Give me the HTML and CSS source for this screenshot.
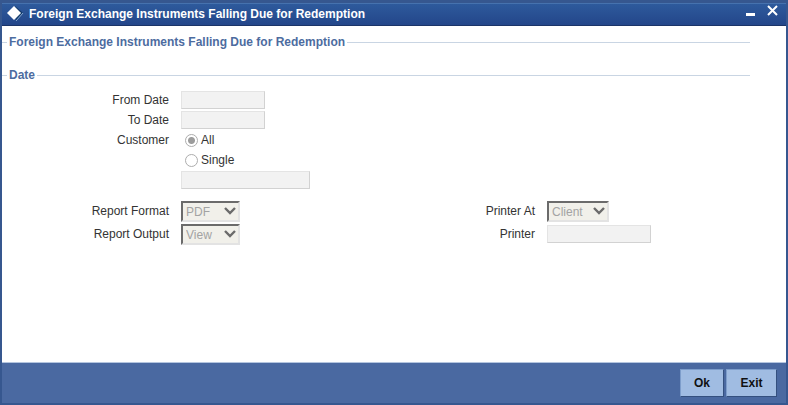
FILE: index.html
```html
<!DOCTYPE html>
<html lang="en">
<head>
    <meta charset="UTF-8">
    <meta name="viewport" content="width=device-width, initial-scale=1.0">
    <title>Foreign Exchange Instruments Falling Due for Redemption</title>
    <link rel="stylesheet" href="styles.css">
</head>
<body>
    <div class="window">
        <header class="title-bar">
            <svg class="logo" width="18" height="18" viewBox="0 0 18 18" aria-hidden="true">
                <path d="M9 1L17 8L10 16Z" fill="#123a6b"/>
                <path d="M10 16L17 8" stroke="#86a9cf" fill="none"/>
                <path d="M8 1L15 8L8 15L1 8Z" fill="#ffffff"/>
            </svg>
            <h1>Foreign Exchange Instruments Falling Due for Redemption</h1>
            <button type="button" class="window-btn" aria-label="Minimize">
                <svg width="12" height="12" viewBox="0 0 12 12"><path d="M1 8H10V11H1Z" fill="#ffffff"/></svg>
            </button>
            <button type="button" class="window-btn" aria-label="Close">
                <svg width="12" height="12" viewBox="0 0 12 12"><path d="M1 1L10 10M10 1L1 10" stroke="#ffffff" stroke-width="2"/></svg>
            </button>
        </header>

        <form class="form" id="reportForm">
            <fieldset class="section section-heading">
                <legend>Foreign Exchange Instruments Falling Due for Redemption</legend>
            </fieldset>

            <fieldset class="section">
                <legend>Date</legend>
                <div class="row">
                    <label for="fromDate">From Date</label>
                    <input type="text" class="text short" id="fromDate" disabled>
                </div>
                <div class="row">
                    <label for="toDate">To Date</label>
                    <input type="text" class="text short" id="toDate" disabled>
                </div>
                <div class="row" role="radiogroup" aria-labelledby="customerLabel">
                    <span class="row-label" id="customerLabel">Customer</span>
                    <input type="radio" name="customer" id="customerAll" checked disabled>
                    <label class="option" for="customerAll">All</label>
                </div>
                <div class="row">
                    <span class="row-label"></span>
                    <input type="radio" name="customer" id="customerSingle" disabled>
                    <label class="option" for="customerSingle">Single</label>
                </div>
                <div class="row">
                    <span class="row-label"></span>
                    <input type="text" class="text long" aria-label="Customer number" disabled>
                </div>
            </fieldset>

            <div class="columns">
                <div class="column">
                    <div class="row">
                        <label for="reportFormat">Report Format</label>
                        <span class="select">
                            <select id="reportFormat" disabled><option>PDF</option></select>
                            <svg class="arrow" width="12" height="8" viewBox="0 0 12 8"><path d="M1 1L6 6L11 1" stroke="#6b6b6b" stroke-width="2.4" fill="none"/></svg>
                        </span>
                    </div>
                    <div class="row">
                        <label for="reportOutput">Report Output</label>
                        <span class="select">
                            <select id="reportOutput" disabled><option>View</option></select>
                            <svg class="arrow" width="12" height="8" viewBox="0 0 12 8"><path d="M1 1L6 6L11 1" stroke="#6b6b6b" stroke-width="2.4" fill="none"/></svg>
                        </span>
                    </div>
                </div>
                <div class="column">
                    <div class="row">
                        <label for="printerAt">Printer At</label>
                        <span class="select wide">
                            <select id="printerAt" disabled><option>Client</option></select>
                            <svg class="arrow" width="12" height="8" viewBox="0 0 12 8"><path d="M1 1L6 6L11 1" stroke="#6b6b6b" stroke-width="2.4" fill="none"/></svg>
                        </span>
                    </div>
                    <div class="row">
                        <label for="printer">Printer</label>
                        <input type="text" class="text medium" id="printer" disabled>
                    </div>
                </div>
            </div>
        </form>

        <footer class="footer">
            <button type="submit" class="btn" form="reportForm">Ok</button>
            <button type="button" class="btn btn-exit">Exit</button>
        </footer>
    </div>
</body>
</html>
```

FILE: styles.css
```css
* {
    margin: 0;
    padding: 0;
    box-sizing: border-box;
}

body {
    font-family: "Liberation Sans", Arial, sans-serif;
    font-size: 12px;
    line-height: 16px;
    color: #333333;
}

input,
select,
button {
    font: inherit;
}

.window {
    display: flex;
    flex-direction: column;
    min-height: 100vh;
    border: 2px solid #36578f;
    border-top-width: 3px;
    background: #ffffff;
}

/* Title bar */
.title-bar {
    display: flex;
    align-items: center;
    height: 23px;
    padding: 0 7px 2px 4px;
    border-top: 1px solid #4672ae;
    border-bottom: 1px solid #1b3468;
    background: linear-gradient(#2e5a9c, #23468a);
    color: #ffffff;
}

.title-bar h1 {
    flex: 1;
    margin-left: 5px;
    font-size: 12px;
    font-weight: bold;
}

.logo,
.window-btn svg {
    display: block;
}

.window-btn {
    margin-left: 10px;
    margin-bottom: 6px;
    border: none;
    background: none;
}

/* Form */
.form {
    flex: 1;
    padding: 8px 36px 8px 0;
}

.section {
    border: none;
    border-top: 1px solid #c9d5e3;
}

.section-heading {
    margin-bottom: 17px;
}

legend {
    margin-left: 5px;
    padding: 0 2px;
    font-weight: bold;
    color: #4d6c9f;
}

.section .row {
    height: 20px;
}

.section legend + .row {
    margin-top: 7px;
}

.row {
    display: flex;
    align-items: center;
    height: 23px;
}

.row > label:first-child,
.row-label {
    width: 167px;
    margin-right: 12px;
    text-align: right;
}

.text {
    height: 18px;
    border: 1px solid #e4e4e4;
    border-right-color: #d2d2d2;
    border-bottom-color: #d2d2d2;
    background: #f2f2f2;
}

.short {
    width: 84px;
}

.medium {
    width: 104px;
}

.long {
    width: 129px;
}

input[type="radio"] {
    appearance: none;
    width: 13px;
    height: 13px;
    margin: 0 3px 0 4px;
    border: 1px solid #adadad;
    border-radius: 50%;
    background: #ffffff;
}

input[type="radio"]:checked {
    background: radial-gradient(circle, #9c9c9c 3px, #ffffff 4px);
}

.columns {
    display: flex;
    margin-top: 11px;
}

.columns .row {
    align-items: flex-start;
}

.columns label {
    padding-top: 2px;
}

.columns .text {
    margin-top: 1px;
}

.column {
    width: 366px;
}

.select {
    position: relative;
    width: 59px;
}

.wide {
    width: 62px;
}

.select select {
    appearance: none;
    display: block;
    width: 100%;
    height: 21px;
    padding-left: 3px;
    border: 2px solid #e3e3e3;
    border-top-color: #6b6b6b;
    border-left-color: #6b6b6b;
    border-radius: 0;
    background: #f1f0ea;
    color: #a3a3a3;
    opacity: 1;
}

.arrow {
    position: absolute;
    top: 6px;
    right: 4px;
    pointer-events: none;
}

/* Footer */
.footer {
    display: flex;
    justify-content: flex-end;
    gap: 2px;
    padding: 6px 9px;
    border-top: 1px solid #b4c5df;
    background: #4a69a1;
}

.btn {
    width: 44px;
    height: 28px;
    border: 1px solid #7d9dcb;
    border-right-color: #34507f;
    border-bottom-color: #34507f;
    background: #a0bce2;
    color: #111111;
    font-weight: bold;
}

.btn-exit {
    width: 51px;
}
```
